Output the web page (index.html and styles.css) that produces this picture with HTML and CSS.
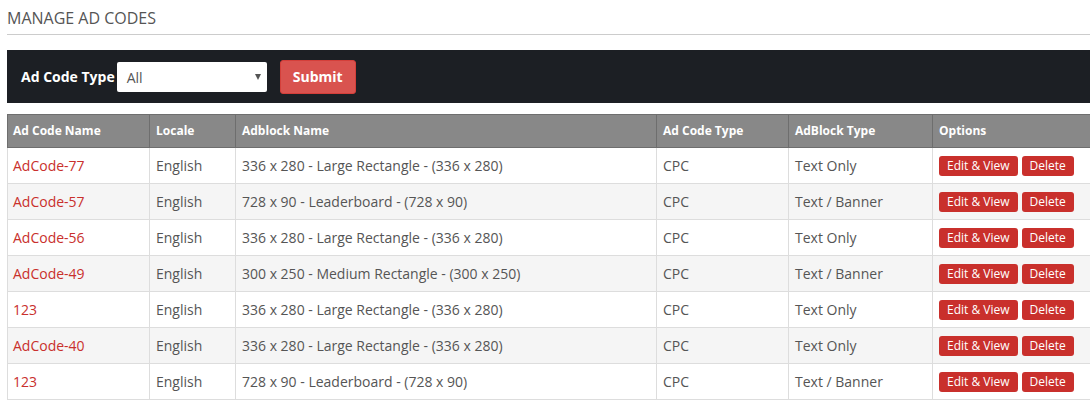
FILE: index.html
```html
<!DOCTYPE html>
<html lang="en">
<head>
<meta charset="utf-8">
<title>Manage Ad Codes</title>
<link rel="stylesheet" href="styles.css">
</head>
<body>
<div class="page">
  <h1 class="title">MANAGE AD CODES</h1>
  <form class="filter-bar">
    <label class="filter-label">Ad Code Type</label>
    <div class="select"><span>All</span></div>
    <button type="button" class="btn-submit">Submit</button>
  </form>
  <table class="codes">
    <colgroup>
      <col class="c1"><col class="c2"><col class="c3"><col class="c4"><col class="c5"><col class="c6">
    </colgroup>
    <thead>
      <tr><th>Ad Code Name</th><th>Locale</th><th>Adblock Name</th><th>Ad Code Type</th><th>AdBlock Type</th><th>Options</th></tr>
    </thead>
    <tbody>
      <tr><td><a href="#">AdCode-77</a></td><td>English</td><td>336 x 280 - Large Rectangle - (336 x 280)</td><td>CPC</td><td>Text Only</td><td><div class="opts"><span class="btn">Edit &amp; View</span><span class="btn">Delete</span></div></td></tr>
      <tr><td><a href="#">AdCode-57</a></td><td>English</td><td>728 x 90 - Leaderboard - (728 x 90)</td><td>CPC</td><td>Text / Banner</td><td><div class="opts"><span class="btn">Edit &amp; View</span><span class="btn">Delete</span></div></td></tr>
      <tr><td><a href="#">AdCode-56</a></td><td>English</td><td>336 x 280 - Large Rectangle - (336 x 280)</td><td>CPC</td><td>Text Only</td><td><div class="opts"><span class="btn">Edit &amp; View</span><span class="btn">Delete</span></div></td></tr>
      <tr><td><a href="#">AdCode-49</a></td><td>English</td><td>300 x 250 - Medium Rectangle - (300 x 250)</td><td>CPC</td><td>Text / Banner</td><td><div class="opts"><span class="btn">Edit &amp; View</span><span class="btn">Delete</span></div></td></tr>
      <tr><td><a href="#">123</a></td><td>English</td><td>336 x 280 - Large Rectangle - (336 x 280)</td><td>CPC</td><td>Text Only</td><td><div class="opts"><span class="btn">Edit &amp; View</span><span class="btn">Delete</span></div></td></tr>
      <tr><td><a href="#">AdCode-40</a></td><td>English</td><td>336 x 280 - Large Rectangle - (336 x 280)</td><td>CPC</td><td>Text Only</td><td><div class="opts"><span class="btn">Edit &amp; View</span><span class="btn">Delete</span></div></td></tr>
      <tr><td><a href="#">123</a></td><td>English</td><td>728 x 90 - Leaderboard - (728 x 90)</td><td>CPC</td><td>Text / Banner</td><td><div class="opts"><span class="btn">Edit &amp; View</span><span class="btn">Delete</span></div></td></tr>
    </tbody>
  </table>
</div>
</body>
</html>
```
FILE: styles.css
```css
html, body {
  margin: 0;
  padding: 0;
  overflow: hidden;
  background: #fff;
}
body {
  font-family: "Open Sans", "Liberation Sans", sans-serif;
  font-size: 14px;
  color: #555;
}
.page {
  width: 1110px;
  padding: 0 7px;
}
.title {
  margin: 0;
  padding: 7px 0 5px;
  font-size: 16px;
  line-height: 22px;
  font-weight: 400;
  color: #555;
  border-bottom: 1px solid #ccc;
}
.filter-bar {
  margin: 15px 0 0;
  height: 53px;
  background: #1c1f24;
  display: flex;
  align-items: center;
  padding: 0 14px;
}
.filter-label {
  color: #fff;
  font-weight: 700;
  font-size: 14px;
  margin-right: 2px;
}
.select {
  position: relative;
  width: 150px;
  height: 30px;
  background: #fff;
  border-radius: 2px;
  box-sizing: border-box;
  padding-left: 10px;
  display: flex;
  align-items: center;
  font-size: 14px;
  color: #555;
  margin-right: 13px;
}
.select span {
  padding-top: 2px;
}
.select::after {
  content: "";
  position: absolute;
  right: 6px;
  top: 12px;
  border-left: 3.5px solid transparent;
  border-right: 3.5px solid transparent;
  border-top: 6px solid #555;
}
.btn-submit {
  height: 34px;
  width: 76px;
  background: #d9534f;
  border: 1px solid #d43f3a;
  border-radius: 3px;
  color: #fff;
  font-family: inherit;
  font-weight: 700;
  font-size: 14px;
  padding: 0;
}
.codes {
  margin-top: 11px;
  width: 1100px;
  table-layout: fixed;
  border-collapse: collapse;
}
col.c1 { width: 142px; }
col.c2 { width: 86px; }
col.c3 { width: 421px; }
col.c4 { width: 132px; }
col.c5 { width: 144px; }
col.c6 { width: 175px; }
.codes th {
  background: #888;
  color: #fff;
  font-size: 12px;
  font-weight: 700;
  text-align: left;
  padding: 6px 6px;
  line-height: 20px;
  border: 1px solid #6e6e6e;
}
.codes td {
  padding: 8px 6px;
  line-height: 19px;
  height: 19px;
  border: 1px solid #ddd;
  white-space: nowrap;
}
.codes th:first-child,
.codes td:first-child {
  padding-left: 5px;
}
.codes tbody tr:nth-child(even) td {
  background: #f5f5f5;
}
.codes a {
  color: #c9302c;
  text-decoration: none;
}
.opts {
  display: flex;
  align-items: center;
  gap: 4px;
  height: 19px;
}
.btn {
  display: block;
  background: #c9302c;
  color: #fff;
  font-size: 12px;
  line-height: 20px;
  height: 20px;
  padding: 0 8px;
  border-radius: 3px;
}
```
